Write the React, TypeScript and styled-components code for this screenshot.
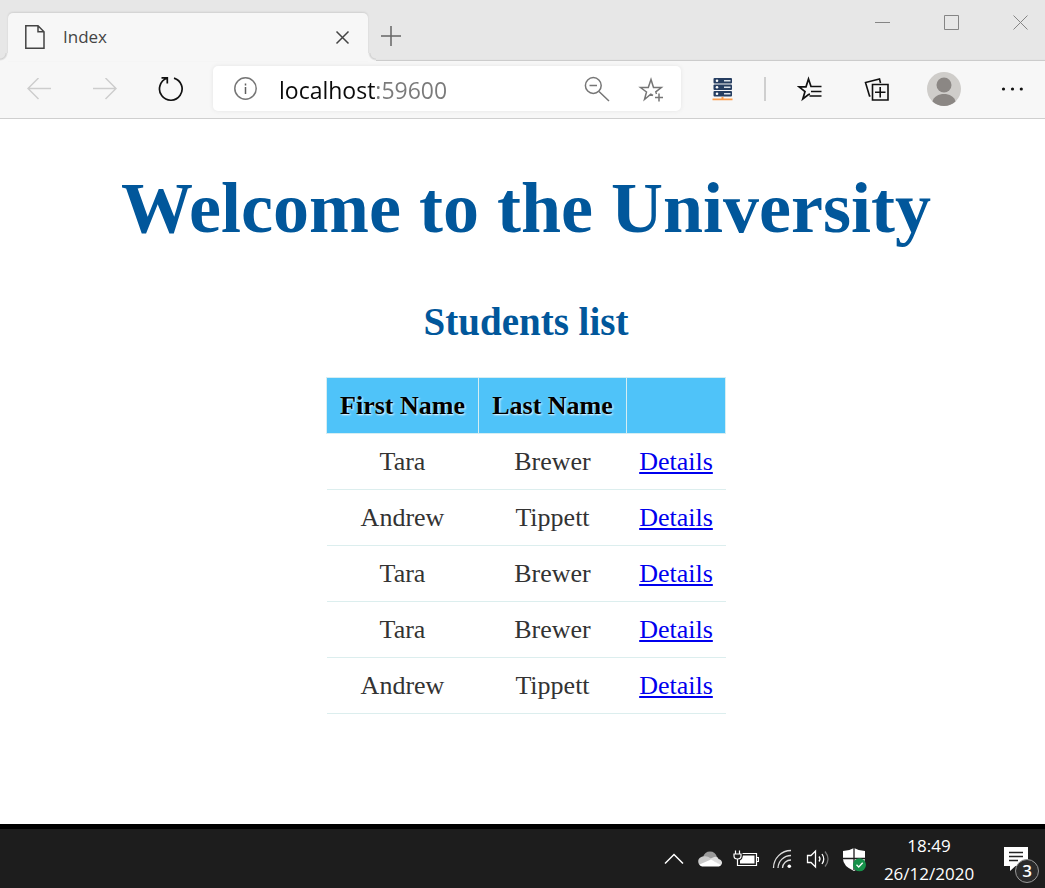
import React from 'react';
import styled, { createGlobalStyle } from 'styled-components';

const UI_FONT = '"Open Sans", "Noto Sans", sans-serif';
const PAGE_FONT = '"Liberation Serif", "Times New Roman", serif';

const GlobalStyle = createGlobalStyle`
  *, *::before, *::after { box-sizing: border-box; }
  html, body { margin: 0; padding: 0; }
  body { background: #fff; font-family: ${UI_FONT}; }
  svg { display: block; flex: none; }
`;

const Desktop = styled.div`
  min-height: 100vh;
  display: flex;
  flex-direction: column;
`;

const PlainButton = styled.button`
  display: flex;
  align-items: center;
  justify-content: center;
  padding: 0;
  border: 0;
  background: none;
  color: inherit;
  font: inherit;
`;

const TabStrip = styled.header`
  display: flex;
  align-items: flex-end;
  height: 61px;
  padding-left: 8px;
  background: #e7e7e7;
  box-shadow: inset 0 -2px 1px -1px #c9c9c9;
`;

const Tab = styled.div`
  position: relative;
  display: flex;
  align-items: center;
  width: 360px;
  height: 48px;
  padding: 0 18px 0 17px;
  gap: 18px;
  border-radius: 5px 5px 0 0;
  background: #f7f7f7;
  box-shadow: 0 -1px 2px #cfcfcf;
  color: #444;
  font-size: 17px;
  line-height: 24px;

  &::before,
  &::after {
    content: '';
    position: absolute;
    bottom: 0;
    width: 8px;
    height: 8px;
  }
  &::before {
    left: -8px;
    background: radial-gradient(circle at 0 0, #e7e7e7 5px, #d2d2d2 6px, #f7f7f7 8px);
  }
  &::after {
    right: -8px;
    background: radial-gradient(circle at 100% 0, #e7e7e7 5px, #d2d2d2 6px, #f7f7f7 8px);
  }
`;

const TabTitle = styled.span`
  flex: 1;
`;

const NewTabButton = styled(PlainButton)`
  width: 46px;
  height: 50px;
  color: #666;
`;

const WindowControls = styled.div`
  display: flex;
  align-self: flex-start;
  gap: 19px;
  margin-left: auto;
  color: #858585;
`;

const WindowButton = styled(PlainButton)`
  width: 50px;
  height: 44px;
`;

const Toolbar = styled.nav`
  display: flex;
  align-items: center;
  height: 58px;
  padding: 0 1px 2px 6px;
  border-bottom: 1px solid #cfcfcf;
  background: #f7f7f7;
  color: #111;
`;

const ToolButton = styled(PlainButton)<{ $width?: number }>`
  flex: none;
  width: ${({ $width = 66 }) => $width}px;
  height: 48px;

  &:disabled {
    color: #cdcdcd;
  }
`;

const AddressBar = styled.div`
  flex: 1;
  min-width: 0;
  display: flex;
  align-items: center;
  height: 45px;
  margin: 0 9px;
  padding-right: 3px;
  border-radius: 5px;
  background: #fff;
  box-shadow: 0 0 4px #e4e4e4;
  color: #767676;
`;

/* The host is drawn darker than the port, so the glyphs take a two-stop fill. */
const AddressInput = styled.input`
  flex: 1;
  min-width: 0;
  height: 36px;
  padding: 2px 0 0;
  border: 0;
  outline: 0;
  color: #111;
  font: 23px/34px ${UI_FONT};
  background: linear-gradient(to right, #0a0a0a 96px, #7a7a7a 96px);
  background-clip: text;
  -webkit-background-clip: text;
  -webkit-text-fill-color: transparent;
`;

const AddressButton = styled(PlainButton)`
  width: 54px;
  height: 45px;
`;

const InfoButton = styled(PlainButton)`
  width: 66px;
  height: 45px;
`;

const Divider = styled.div`
  width: 2px;
  height: 24px;
  margin: 0 10px 0 8px;
  background: #cfcfcf;
`;

const Page = styled.main`
  flex: 1;
  display: flex;
  flex-direction: column;
  align-items: center;
  padding: 47px 0 48px 7px;
  background: #fff;
  color: #333;
  font-family: ${PAGE_FONT};
`;

const Title = styled.h1`
  margin: 0 0 50px;
  color: #01579b;
  font-size: 72px;
  line-height: 84px;
  text-align: center;
`;

const Subtitle = styled.h2`
  margin: 0 0 33px;
  color: #01579b;
  font-size: 39px;
  line-height: 44px;
  text-align: center;
`;

const StudentTable = styled.table`
  width: 399px;
  table-layout: fixed;
  border-collapse: collapse;
  font-size: 26px;
  line-height: 31px;
  text-align: center;
`;

const Column = styled.col<{ $width: number }>`
  width: ${({ $width }) => $width}px;
`;

const HeadCell = styled.th`
  padding: 12px 0;
  border: 1px solid #d5eef3;
  background: #4fc3f9;
  color: #000;
  text-shadow: 1px 1px 2px #fff;
  white-space: nowrap;
`;

const Cell = styled.td`
  padding: 12px 0;
  border-bottom: 1px solid #dceeee;
`;

const DetailsLink = styled.a`
  color: #0000ee;
`;

const Taskbar = styled.footer`
  display: flex;
  align-items: center;
  justify-content: flex-end;
  height: 64px;
  border-top: 5px solid #000;
  background: #1d1d1d;
  color: #fff;
`;

const TrayButton = styled(PlainButton)`
  width: 36px;
  height: 59px;
`;

const Clock = styled.div`
  width: 114px;
  padding-top: 2px;
  font-size: 17px;
  line-height: 28px;
  text-align: center;
`;

const NoticeButton = styled(PlainButton)`
  position: relative;
  width: 59px;
  height: 59px;
`;

const NoticeCount = styled.span`
  position: absolute;
  right: 6px;
  bottom: 5px;
  width: 24px;
  height: 24px;
  border: 1px solid #999;
  border-radius: 50%;
  background: #2b2b2b;
  font-size: 17px;
  font-weight: 600;
  line-height: 22px;
  text-align: center;
`;

type IconProps = { w: number; h: number; stroke?: number; children: React.ReactNode };

const Icon = ({ w, h, stroke = 1.5, children }: IconProps) => (
  <svg width={w} height={h} viewBox={`0 0 ${w} ${h}`} fill="none" stroke="currentColor" strokeWidth={stroke} aria-hidden="true">
    {children}
  </svg>
);

const students = [
  ['Tara', 'Brewer'],
  ['Andrew', 'Tippett'],
  ['Tara', 'Brewer'],
  ['Tara', 'Brewer'],
  ['Andrew', 'Tippett'],
];

const BrowserTabs = () => (
  <TabStrip>
    <Tab>
      <Icon w={20} h={24}>
        <path d="M.8.8H13l6 6v16.4H.8zM13 .8v6h6" />
      </Icon>
      <TabTitle>Index</TabTitle>
      <PlainButton aria-label="Close tab">
        <Icon w={15} h={15}><path d="m1.5 1.5 12 12m0-12-12 12" /></Icon>
      </PlainButton>
    </Tab>
    <NewTabButton aria-label="New tab">
      <Icon w={20} h={20}><path d="M10 0v20M0 10h20" /></Icon>
    </NewTabButton>
    <WindowControls>
      <WindowButton aria-label="Minimize">
        <Icon w={15} h={15} stroke={1}><path d="M0 7.5h15" /></Icon>
      </WindowButton>
      <WindowButton aria-label="Maximize">
        <Icon w={15} h={15} stroke={1}><path d="M.5.5h14v14H.5z" /></Icon>
      </WindowButton>
      <WindowButton aria-label="Close">
        <Icon w={15} h={15} stroke={1}><path d="m.5.5 14 14m0-14-14 14" /></Icon>
      </WindowButton>
    </WindowControls>
  </TabStrip>
);

const BrowserToolbar = () => (
  <Toolbar>
    <ToolButton disabled aria-label="Back">
      <Icon w={24} h={22}><path d="M24 10.500H1M11.500 0 1 10.500 11.500 21" /></Icon>
    </ToolButton>
    <ToolButton disabled aria-label="Forward">
      <Icon w={24} h={22}><path d="M0 10.500h23M12.500 0 23 10.500 12.500 21" /></Icon>
    </ToolButton>
    <ToolButton aria-label="Refresh">
      <Icon w={26} h={26} stroke={1.7}>
        <path d="M16 2.100A11.300 11.300 0 1 1 9 2.300M3.500 1.800H9.300V7.500" />
      </Icon>
    </ToolButton>
    <AddressBar>
      <InfoButton aria-label="Site information">
        <Icon w={24} h={24}>
          <circle cx="11.500" cy="11.500" r="10.700" />
          <path d="M11.500 10v7M11.500 6.500v2" stroke="#5f5f5f" />
        </Icon>
      </InfoButton>
      <AddressInput aria-label="Address" defaultValue="localhost:59600" />
      <AddressButton aria-label="Zoom out">
        <Icon w={26} h={26}>
          <circle cx="9.300" cy="9.500" r="7.900" />
          <path d="M5.500 9.500h7.500M15 15.500 25 25" />
        </Icon>
      </AddressButton>
      <AddressButton aria-label="Add to favorites">
        <Icon w={26} h={26}>
          <path d="M15 19.500 12.800 18.200 6.500 23.500 8.500 16 2.500 11.500H10.300L13 3.500 15.500 11.500H23.300L17.800 15.800 18.500 18M21 17.500v8M17 21.500h8" />
        </Icon>
      </AddressButton>
    </AddressBar>
    <ToolButton aria-label="Server extension">
      <Icon w={22} h={26} stroke={0}>
        {[2, 8.500, 15].map((y) => (
          <g key={y}>
            <rect x="1.500" y={y} width="18.500" height="5.500" rx="1" fill="#263e61" />
            <circle cx="5" cy={y + 2.7} r="1.300" fill="#fff" />
            <rect x="12" y={y + 2} width="6.500" height="1.500" fill="#dbe2ea" />
          </g>
        ))}
        <path d="M.5 22.500h9v-1.500h2v1.500h9v1.700H.5z" fill="#fb9d4c" />
      </Icon>
    </ToolButton>
    <Divider />
    <ToolButton $width={67} aria-label="Favorites">
      <Icon w={26} h={26} stroke={1.7}>
        <path d="M13 18.200 11.500 18.500 5.800 23 8 15.500 2 10.800H9L11.500 3 14 10.500H24.500M14 15.500h10.500M12.500 20h12" />
      </Icon>
    </ToolButton>
    <ToolButton $width={67} aria-label="Collections">
      <Icon w={26} h={26} stroke={1.600}>
        <path d="M6.500 20H5.500L1.500 6.500 15.500 3 16.500 7M8.500 8.500h15.500v15.500H8.500zM16.200 11v10.500M11 16.200h10.500" />
      </Icon>
    </ToolButton>
    <ToolButton $width={67} aria-label="Profile">
      <Icon w={34} h={34} stroke={0}>
        <circle cx="17" cy="17" r="17" fill="#cfcdca" />
        <circle cx="17" cy="13" r="7.500" fill="#8b8784" />
        <path d="M5.500 29.500C7.500 19.500 26.500 19.500 28.500 29.500A17 17 0 0 1 5.500 29.500Z" fill="#8b8784" />
      </Icon>
    </ToolButton>
    <ToolButton $width={67} aria-label="Settings and more">
      <Icon w={24} h={6} stroke={0}>
        <g fill="#111">
          <circle cx="4.500" cy="3" r="1.600" />
          <circle cx="13.500" cy="3" r="1.600" />
          <circle cx="22.300" cy="3" r="1.600" />
        </g>
      </Icon>
    </ToolButton>
  </Toolbar>
);

const SystemTray = () => (
  <Taskbar>
    <TrayButton aria-label="Show hidden icons">
      <Icon w={20} h={12}><path d="m1 10.500 9-9 9 9" /></Icon>
    </TrayButton>
    <TrayButton aria-label="OneDrive">
      <Icon w={24} h={16} stroke={0}>
        <path d="M5 6C6 2.500 8.500 .5 12 .5c3.500 0 6 2 7 5.500L12 9z" fill="#9a9a9a" />
        <path d="M2 14.500C-1.500 11 .5 5.500 5.500 5.500c2.500-.5 5 0 7 2L16 10 4 15z" fill="#c9c9c9" />
        <path d="M11.500 8 15 6.500c2.500-1.500 5-.5 5.500 1.500 4 .5 4.500 5 2 6.500z" fill="#dedede" />
        <path d="M1.500 13.500 13 8.500 23 14c-1 1.300-2 1.500-3 1.500H5c-1.500 0-2.500-.5-3.500-2z" fill="#fff" />
      </Icon>
    </TrayButton>
    <TrayButton aria-label="Battery charging">
      <Icon w={26} h={20} stroke={1.200}>
        <path d="M2.500 1.500v3M6.500 1.500v3M1 5h7v2q0 3-3.500 3T1 7zM4.500 10v6.500h19V4.500H9.500M24 8.500h1.500v4H24" />
        <path d="M7 14.500V11.500Q9.800 10 10 6.500H21.500V14.500Z" fill="#fff" stroke="none" />
      </Icon>
    </TrayButton>
    <TrayButton aria-label="Wi-Fi">
      <Icon w={20} h={20} stroke={1.300}>
        <path d="M1.500 19A17.500 17.500 0 0 1 19 1.500M6 19A13 13 0 0 1 19 6.500M10.500 19a8.500 8.500 0 0 1 8.500-8" stroke="#ddd" />
        <circle cx="17.300" cy="17.300" r="1.800" fill="#fff" stroke="none" />
      </Icon>
    </TrayButton>
    <TrayButton aria-label="Volume">
      <Icon w={24} h={20} stroke={1.300}>
        <path d="M1.500 6.500v7H5l4.500 4.500V2L5 6.500zM13 7.500q2 2.500 0 5M16 5q3.500 5 0 10" />
        <path d="M19 2.500q6 7.500 0 15" stroke="#777" />
      </Icon>
    </TrayButton>
    <TrayButton aria-label="Windows Security">
      <Icon w={24} h={26} stroke={0}>
        <path d="M1 5Q7 5 12 2q5 3 11 3v8q0 7-11 12Q1 20 1 13z" fill="#fff" />
        <path d="M12 2v22M1 12.500h22" stroke="#1d1d1d" strokeWidth="1.300" />
        <circle cx="17.500" cy="18.800" r="6.500" fill="#16914a" />
        <path d="m14.500 18.800 2.200 2.200 4-4.200" stroke="#fff" strokeWidth="1.300" />
      </Icon>
    </TrayButton>
    <Clock>
      <div>18:49</div>
      <div>26/12/2020</div>
    </Clock>
    <NoticeButton aria-label="Notifications, 3 new">
      <Icon w={24} h={24} stroke={0}>
        <path d="M0 0h24v19H11.500L6 24v-5H0z" fill="#fff" />
        <path d="M5 5.500h14M5 9.500h14M5 13.500h9" stroke="#222" strokeWidth="1.300" />
      </Icon>
      <NoticeCount>3</NoticeCount>
    </NoticeButton>
  </Taskbar>
);

export default function App() {
  return (
    <Desktop>
      <GlobalStyle />
      <BrowserTabs />
      <BrowserToolbar />
      <Page>
        <Title>Welcome to the University</Title>
        <Subtitle>Students list</Subtitle>
        <StudentTable>
          <colgroup>
            <Column $width={152} />
            <Column $width={148} />
            <Column $width={99} />
          </colgroup>
          <thead>
            <tr>
              <HeadCell scope="col">First Name</HeadCell>
              <HeadCell scope="col">Last Name</HeadCell>
              <HeadCell scope="col" aria-label="Actions" />
            </tr>
          </thead>
          <tbody>
            {students.map(([first, last], i) => (
              <tr key={i}>
                <Cell>{first}</Cell>
                <Cell>{last}</Cell>
                <Cell><DetailsLink href="#details">Details</DetailsLink></Cell>
              </tr>
            ))}
          </tbody>
        </StudentTable>
      </Page>
      <SystemTray />
    </Desktop>
  );
}
